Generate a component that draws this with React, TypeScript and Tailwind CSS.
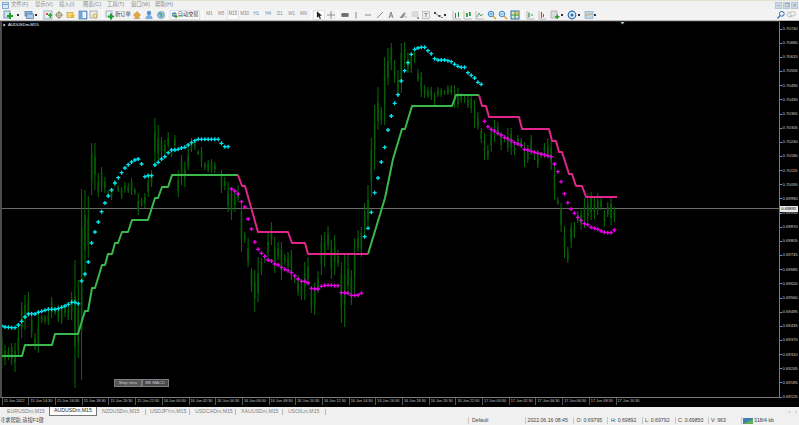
import React from "react";

const B: number[] = [
330,368,345,365,347,360,343,365,343,372,326,357,302,338,295,330,292,317,315,338,
333,350,312,353,315,323,315,324,310,325,297,318,308,315,305,322,307,324,305,317,
305,320,292,320,260,388,280,358,189,380,190,278,196,258,143,195,143,190,173,197,
167,192,177,193,190,197,188,200,180,187,185,192,187,199,182,193,183,193,178,195,
188,195,193,215,198,207,193,208,173,197,170,187,118,167,125,160,137,157,140,158,
132,148,150,157,135,150,170,197,155,185,162,187,147,170,138,152,140,150,150,155,
147,167,162,170,160,172,159,173,162,173,172,173,170,193,177,190,182,212,187,220,
190,212,185,202,202,252,232,243,238,267,268,292,270,312,257,302,258,275,255,263,
233,258,222,245,237,273,242,260,242,280,254,265,252,270,250,280,275,283,275,296,
283,300,262,300,257,285,288,313,282,315,271,293,235,275,232,267,226,250,240,279,
235,275,250,267,262,323,255,327,255,293,270,305,238,293,230,252,227,257,203,237,
185,227,138,197,105,170,87,130,107,125,57,125,48,85,43,70,60,83,70,97,
43,93,42,67,52,73,53,73,48,63,69,82,72,97,85,98,87,98,87,100,
92,105,87,97,88,97,90,95,85,95,85,95,85,108,88,108,93,103,95,103,
95,108,95,113,100,128,112,130,128,143,133,160,145,160,128,152,120,142,122,135,
132,150,135,142,128,152,128,155,142,155,135,145,138,148,142,167,145,163,135,155,
150,160,150,168,152,158,143,158,138,158,142,170,165,200,197,205,203,232,226,258,
247,263,223,248,222,238,211,223,210,230,198,228,193,222,192,220,198,219,193,215,
198,210,210,227,202,217,198,225,207,222,
];

const D: number[] = [
326,327,327.3,327.7,327.7,325,321.3,317,314,313.7,314,312.3,311.3,310.3,309.3,309.3,309.3,308.7,307.3,306,
304.3,302.3,302.3,303.7,281,274,262,243,232,222,211.7,203,196,190,183,177.7,172.7,168,164.7,162,
160,159,164,176.7,175.7,175.7,165,162.3,159,156.7,152.7,150,150,149.3,148,147.3,145,142.7,140.7,139.3,
139.3,139.3,139.3,139.3,139.3,139.3,143.3,146.7,146.7,189,191,194,201.7,207,219,229,242,249.3,253.3,256.3,
260,261,264,265,267.3,269.3,270.7,272.7,275.7,279,281.3,281.3,283,288.3,289,289,286.3,285.3,285.3,285.3,
285.7,285.7,292.7,292.7,293.3,295.3,295.3,295,293.3,236.7,228.3,212.3,192.7,178,162,147.3,130,116,103.3,94.7,
81,70.7,62.7,54.3,49.3,48,47.3,47.3,50.7,53.7,58.7,60,60,60,60.7,61.7,64.3,66.3,67.3,67.3,
72.7,75.3,78,82.3,84.3,121.3,126.7,129.3,131,133.3,135,137.3,138.7,140.7,142.7,144,145.3,149.3,150,151.3,
152.3,153.3,154,155,155.7,156.7,164,171.7,181.7,193.7,202.7,209,213.3,217.3,220.3,223.7,224.7,227.3,228.3,229.3,
231,232.3,232.7,232.7,230,
];

const X = (i: number) => 1.7 + 3.33 * i;
const isCyan = (i: number) => i <= 68 || (i >= 109 && i <= 144);

const green1 = "1,356 22,356 25,345 52,345 55,334 78,334 85,311 88,311 92,288 95,288 102,265 105,265 108,254 112,254 115,243 118,243 122,232 128,232 132,220 148,220 155,198 158,198 162,187 168,187 172,175 238,175";
const pink1 = "238,175 242,186 245,186 258,232 288,232 292,243 305,243 308,254 368,254";
const green2 = "368,254 385,198 393,159 402,129 405,129 412,106 452,106 456,95 479,95";
const pink2 = "479,95 482,106 486,106 489,117 519,117 522,129 549,129 552,141 556,141 559,152 562,152 569,174 572,174 576,186 582,186 586,197 617,197";

const PRICES = ["0.70740","0.70680","0.70615","0.70555","0.70490","0.70430","0.70365","0.70305","0.70240","0.70180","0.70115","0.70055","0.69990","0.69930","0.69870","0.69805","0.69745","0.69685","0.69620","0.69560","0.69495","0.69435","0.69370","0.69310","0.69245","0.69185","0.69125"];
const TIMES = ["15 Jun 2022","15 Jun 14:30","15 Jun 16:30","15 Jun 18:30","15 Jun 20:30","15 Jun 22:30","16 Jun 00:30","16 Jun 02:30","16 Jun 04:30","16 Jun 06:30","16 Jun 08:30","16 Jun 10:30","16 Jun 12:30","16 Jun 14:30","16 Jun 16:30","16 Jun 18:30","16 Jun 20:30","16 Jun 22:30","17 Jun 00:30","17 Jun 02:30","17 Jun 04:30","17 Jun 06:30","17 Jun 08:30","17 Jun 10:30"];

function Slot({ children }: { children?: React.ReactNode }) {
  return <div className="w-[11.7px] h-[10px] flex items-center justify-center shrink-0">{children}</div>;
}
function Ico({ children }: { children: React.ReactNode }) {
  return <svg width="10" height="10" viewBox="0 0 10 10">{children}</svg>;
}
const Sep = () => <div className="w-px h-[9px] bg-[#c4c4c4] border-r border-white shrink-0" />;
const Caret = () => <div className="w-[2px] h-[2px] bg-[#333] shrink-0" />;

const IcNew = () => <Ico><rect x="1" y="1" width="6" height="7" fill="#cfe0ee" stroke="#5b87ad" strokeWidth=".8"/><path d="M4 5h2V3h2v2h2v2H8v2H6V7H4z" fill="#20a020"/></Ico>;
const IcProfile = () => <Ico><rect x="1" y="1.5" width="7" height="4.5" fill="#8fb4dc" stroke="#4a78a8" strokeWidth=".7"/><rect x="2.5" y="4" width="7" height="4.5" fill="#a9c7e8" stroke="#4a78a8" strokeWidth=".7"/></Ico>;
const IcChartPlus = () => <Ico><rect x="1" y="1" width="8" height="8" fill="#e8eef2" stroke="#7a9ab0" strokeWidth=".7"/><path d="M3 3h2v2H3z" fill="#d44"/><path d="M5 4.5h1.5V3H8v1.5h1V6H8v2H6.5V6H5z" fill="#2aa52a"/></Ico>;
const IcCross = () => <Ico><circle cx="5" cy="5" r="2.6" fill="none" stroke="#8a8a60" strokeWidth="1"/><path d="M5 .8v8.4M.8 5h8.4" stroke="#8a8a60" strokeWidth=".8"/></Ico>;
const IcStar = () => <Ico><rect x="1" y="2.5" width="6" height="5" fill="#f3d774" stroke="#b79a2e" strokeWidth=".6"/><path d="M6.5 3.5l1 1.6 1.7.3-1.2 1.2.3 1.7-1.8-.8-1.7.8.3-1.7-1.2-1.2 1.7-.3z" fill="#e9b92c"/></Ico>;
const IcBlueWin = () => <Ico><rect x="1.2" y="1.2" width="7.6" height="7.6" fill="#f0f4f8" stroke="#3b78b8" strokeWidth="1"/><rect x="1.5" y="1.5" width="3" height="7" fill="#6fa5d8"/></Ico>;
const IcMag = () => <Ico><rect x="1" y="1" width="7" height="7" fill="#eaeaea" stroke="#9a9a9a" strokeWidth=".7"/><circle cx="6" cy="6" r="2" fill="#f6e7a4" stroke="#b69a3a" strokeWidth=".7"/></Ico>;
const IcOrder = () => <Ico><rect x="1" y="1" width="6" height="6" fill="#e4eef4" stroke="#7f9db0" strokeWidth=".7"/><path d="M3 5.5h2v-2h2v2h2v2H7v2H5v-2H3z" fill="#1e9e2a"/></Ico>;
const IcDiamond = () => <Ico><path d="M5 1.5l3.5 3.5L5 8.5 1.5 5z" fill="#e3a93a" stroke="#a87820" strokeWidth=".5"/><path d="M2 7.5h6v1.3H2z" fill="#c99a55"/></Ico>;
const IcPerson = () => <Ico><circle cx="5" cy="3" r="2.2" fill="#5a92cf"/><path d="M1.5 9c0-3 1.5-4 3.5-4s3.5 1 3.5 4z" fill="#7eaee0"/></Ico>;
const IcGlobe = () => <Ico><circle cx="5" cy="5" r="3.6" fill="#8fbfd8" stroke="#6c93aa" strokeWidth=".6"/><path d="M3 3.5c1 .3 2 0 2.5 1s-1 1.5-.5 2.5" stroke="#4f9d58" strokeWidth="1.1" fill="none"/></Ico>;
const IcAuto = () => <Ico><circle cx="4.5" cy="4.5" r="3.4" fill="#3d8fd0"/><path d="M2 4.5h5" stroke="#e6c43a" strokeWidth="1.5"/><path d="M5 6.5h1.3V5h1.4v1.5H9V8H7.7v1.5H6.3V8H5z" fill="#26a32a"/></Ico>;
const IcCursor = () => <Ico><path d="M3 1v7l1.8-1.7L6 9l1.2-.5L6 5.9h2.3z" fill="#222"/></Ico>;
const IcPlus = () => <Ico><path d="M5 1v8M1 5h8" stroke="#888" strokeWidth=".9"/></Ico>;
const IcHBox = () => <Ico><rect x="1.5" y="3" width="7" height="4" fill="#777"/><path d="M1.5 5h7" stroke="#555" strokeWidth=".6"/></Ico>;
const IcV = () => <Ico><path d="M5 2v6.5" stroke="#888" strokeWidth="1"/></Ico>;
const IcH = () => <Ico><path d="M2 5h6" stroke="#888" strokeWidth="1"/></Ico>;
const IcDiag = () => <Ico><path d="M2 8l6-6" stroke="#888" strokeWidth="1"/></Ico>;
const IcA = () => <Ico><path d="M3 8l2-6 2 6M3.8 6h2.4" stroke="#777" strokeWidth=".9" fill="none"/></Ico>;
const IcPen = () => <Ico><path d="M1.5 8l4-5 2 1-3 4z" fill="#8a8a8a"/><path d="M6 2l2 2" stroke="#b5b5b5" strokeWidth="1"/><path d="M6 7h3" stroke="#999" strokeWidth=".8"/></Ico>;
const IcLines = () => <Ico><path d="M1.5 2h7M1.5 4h7M1.5 6h7" stroke="#bcbcbc" strokeWidth=".9"/><path d="M7 7h2v2H7z" fill="#999"/></Ico>;
const IcT = () => <Ico><rect x="1.5" y="1.5" width="7" height="7" fill="#ececec" stroke="#a8a8a8" strokeWidth=".6"/><path d="M3.5 3.5h3M5 3.5v3.5" stroke="#777" strokeWidth=".8"/></Ico>;
const IcNodes = () => <Ico><path d="M2 3l4 3" stroke="#666" strokeWidth=".8"/><path d="M1 2h2v2H1zM5.5 5h2v2h-2z" fill="#444"/><path d="M8 7.5l1.5 0" stroke="#2c8f3c" strokeWidth="1"/></Ico>;
const IcBars = () => <Ico><path d="M1 1v8h8" stroke="#999" strokeWidth=".6" fill="none"/><path d="M3.5 3v5M3 4h1M6.5 2v5M6 6h1" stroke="#2c8f3c" strokeWidth="1"/></Ico>;
const IcCandle = () => <Ico><path d="M1 1v8h8" stroke="#999" strokeWidth=".6" fill="none"/><rect x="3" y="3" width="1.8" height="4" fill="#2c9f3c"/><rect x="6" y="2" width="1.8" height="4" fill="#2c9f3c"/></Ico>;
const IcLineCh = () => <Ico><path d="M1 1v8h8" stroke="#999" strokeWidth=".6" fill="none"/><path d="M2 7l2-4 2 3 2-2" stroke="#3a8f4a" strokeWidth=".8" fill="none"/></Ico>;
const IcZoomIn = () => <Ico><circle cx="4" cy="4" r="2.8" fill="#cfe5f5" stroke="#3d8ad0" strokeWidth="1"/><path d="M6 6l3 3" stroke="#d6a52a" strokeWidth="1.4"/><path d="M2.6 4h2.8M4 2.6v2.8" stroke="#3d8ad0" strokeWidth=".7"/></Ico>;
const IcZoomOut = () => <Ico><circle cx="4" cy="4" r="2.8" fill="#cfe5f5" stroke="#3d8ad0" strokeWidth="1"/><path d="M6 6l3 3" stroke="#d6a52a" strokeWidth="1.4"/><path d="M2.6 4h2.8" stroke="#3d8ad0" strokeWidth=".7"/></Ico>;
const IcGrid = () => <Ico><rect x="1" y="1" width="8" height="8" fill="#dde8d8" stroke="#2c6fb5" strokeWidth="1"/><path d="M5 1v8M1 5h8" stroke="#2a8f3a" strokeWidth="1"/><path d="M5.5 1.5h3v3h-3z" fill="#e8b43a"/></Ico>;
const IcShift = () => <Ico><path d="M2 1v8h7" stroke="#999" strokeWidth=".6" fill="none"/><path d="M4 2.5v5" stroke="#2c8f3c" strokeWidth="1.2"/><path d="M6 5l2 0" stroke="#2c8f3c" strokeWidth="1"/></Ico>;
const IcShiftR = () => <Ico><path d="M2 1v8h7" stroke="#999" strokeWidth=".6" fill="none"/><path d="M4.5 2v6" stroke="#c84a2a" strokeWidth="1.2"/><path d="M6.5 4v3" stroke="#2c8f3c" strokeWidth="1"/></Ico>;
const IcIndic = () => <Ico><rect x="1" y="1" width="6" height="7" fill="#ddd" stroke="#999" strokeWidth=".6"/><path d="M5 6h1.5V4.5H8V6h1.5v1.5H8V9H6.5V7.5H5z" fill="#1ea52a"/></Ico>;
const IcClock = () => <Ico><circle cx="5" cy="5" r="3.8" fill="#d8e8f4" stroke="#2d6fb0" strokeWidth="1.2"/><circle cx="5" cy="5" r="1.5" fill="#2d6fb0"/></Ico>;
const IcTemplate = () => <Ico><rect x="1" y="1.5" width="8" height="7" fill="#bcd6ea" stroke="#7fa0bc" strokeWidth=".6"/><path d="M2 6l2-2 2 1 2-2" stroke="#d89a3a" strokeWidth=".8" fill="none"/></Ico>;
const IcSearch = () => <Ico><circle cx="5.8" cy="3.8" r="2.4" fill="none" stroke="#2c6fc0" strokeWidth="1"/><path d="M4 5.6L1.5 8.5" stroke="#2c6fc0" strokeWidth="1.2"/></Ico>;
const IcChat = () => <Ico><ellipse cx="4" cy="4.5" rx="3" ry="2.4" fill="#eee" stroke="#aaa" strokeWidth=".7"/><ellipse cx="6.8" cy="3.7" rx="2.6" ry="2.2" fill="#f4f4f4" stroke="#aaa" strokeWidth=".7"/></Ico>;

function TF({ t, on }: { t: string; on?: boolean }) {
  return (
    <div className={on
      ? "w-[11.75px] h-[10px] flex items-center justify-center shrink-0 text-[4.5px] text-[#777] bg-[#fbfbfb] border border-[#e2e2e2]"
      : "w-[11.75px] h-[10px] flex items-center justify-center shrink-0 text-[4.5px] text-[#888]"}>
      {t}
    </div>
  );
}

const MENUS = ["文件(F)", "显示(V)", "插入(I)", "图表(C)", "工具(T)", "窗口(W)", "帮助(H)"];
const TABS = [
  ["EURUSDm,M15", "w-[47px] pl-[7px]"],
  ["AUDUSDm,M15", ""],
  ["NZDUSDm,M15", "w-[47px] pl-[3px]"],
  ["USDJPYm,M15", "w-[44px] pl-[4px]"],
  ["USDCADm,M15", "w-[46px] pl-[5px]"],
  ["XAUUSDm,M15", "w-[47px] pl-[5px]"],
  ["USOILm,M15", "w-[43px] pl-[5px]"],
];

export default function App() {
  return (
    <div className="w-[799px] h-[425px] overflow-hidden flex flex-col bg-[#f0f0f0] font-['Liberation_Sans','Noto_Sans_CJK_SC',sans-serif] leading-none">
      {/* menu bar */}
      <div className="h-[9px] flex items-center shrink-0 bg-[#f1f1f1] border-t border-[#dfe3d2]">
        <svg width="7" height="7" viewBox="0 0 7 7" className="ml-[2px] shrink-0"><rect x=".5" y=".5" width="6" height="6" fill="#dbe8f4" stroke="#6d9cc8" strokeWidth=".8"/><path d="M1 2.5h5" stroke="#6d9cc8"/></svg>
        <div className="flex text-[5.3px] text-[#8a8a8a] ml-[2px]">
          {MENUS.map((m) => <span key={m} className="w-[24px]">{m}</span>)}
        </div>
        <div className="ml-auto flex gap-px pr-px">
          {["–", "❐", "×"].map((s) => (
            <div key={s} className="w-[7px] h-[7px] bg-[#c9d9e8] border border-[#b4c8da] text-[5px] text-[#5d7f9e] flex items-center justify-center">{s}</div>
          ))}
        </div>
      </div>
      {/* toolbar */}
      <div className="h-[12px] flex items-center shrink-0 bg-[#f3f3f3] border-b border-[#b8b8b8]">
        <div className="w-[2px] shrink-0" />
        <Slot><IcNew /></Slot><div className="w-[3px]"/><Caret /><div className="w-[4px]"/>
        <Slot><IcProfile /></Slot><div className="w-[1px]"/><Caret /><div className="w-[3px]"/><Sep /><div className="w-[0.5px]"/>
        <Slot><IcChartPlus /></Slot><Slot><IcCross /></Slot><Slot><IcStar /></Slot><Slot><IcBlueWin /></Slot><Slot><IcMag /></Slot>
        <div className="w-[2px]"/><Sep /><div className="w-[1px]"/>
        <Slot><IcOrder /></Slot>
        <span className="text-[5.2px] text-[#333] w-[16.5px] -ml-[1px]">新订单</span>
        <Slot><IcDiamond /></Slot><Slot><IcPerson /></Slot><Slot><IcGlobe /></Slot>
        <Sep /><div className="w-[2px]"/>
        <div className="w-[30px] h-[10px] flex items-center bg-[#fbfbfb] border border-[#e0e0e0] shrink-0">
          <IcAuto />
          <span className="text-[5.2px] text-[#333] whitespace-nowrap">自动交易</span>
        </div>
        <div className="w-[2px]"/><Sep /><div className="w-[1px]"/>
        <TF t="M1" /><TF t="M5" /><TF t="M15" on /><TF t="M30" /><TF t="H1" /><TF t="H4" /><TF t="D1" /><TF t="W1" /><TF t="MN" />
        <div className="w-[2px]"/><Sep /><div className="w-[1px]"/>
        <div className="w-[11.7px] h-[10px] flex items-center justify-center bg-white border border-[#e2e2e2] shrink-0"><IcCursor /></div>
        <Slot><IcPlus /></Slot>
        <Sep /><div className="w-[1px]"/>
        <Slot><IcHBox /></Slot><Slot><IcV /></Slot><Slot><IcH /></Slot><Slot><IcDiag /></Slot><Slot><IcA /></Slot><Slot><IcPen /></Slot><Slot><IcLines /></Slot><Slot><IcT /></Slot><Slot><IcNodes /></Slot>
        <Caret /><div className="w-[3px]"/><Sep /><div className="w-[1px]"/>
        <Slot><IcBars /></Slot><Slot><IcCandle /></Slot><Slot><IcLineCh /></Slot><Slot><IcZoomIn /></Slot><Slot><IcZoomOut /></Slot><Slot><IcGrid /></Slot>
        <div className="w-[1px]"/><Sep /><div className="w-[1px]"/>
        <Slot><IcShift /></Slot><Slot><IcShiftR /></Slot>
        <div className="w-[2px]"/>
        <Slot><IcIndic /></Slot><Caret /><div className="w-[3px]"/>
        <Slot><IcClock /></Slot><Caret /><div className="w-[3px]"/>
        <Slot><IcTemplate /></Slot><Caret />
        <div className="ml-auto flex pr-[3px]"><IcSearch /><IcChat /></div>
      </div>
      {/* chart */}
      <div className="h-[386px] shrink-0 flex bg-black relative">
        <div className="w-[780px] shrink-0 flex flex-col">
          <div className="h-[377px] shrink-0 relative border-t border-l-2 border-r border-b border-t-[#2a2a2a] border-l-[#4c4c4c] border-r-[#7a7a7a] border-b-[#7a7a7a]">
            <svg width="777" height="375" viewBox="2 22 777 375" className="block">
              <line x1="2" x2="779" y1="208.5" y2="208.5" stroke="#6a6a6a" strokeWidth="1" />
              {D.map((_, i) => {
                const hi = B[i * 2], lo = B[i * 2 + 1];
                const h = lo - hi;
                const x = X(i);
                const t = hi + h * (0.2 + (i % 3) * 0.08);
                const b = lo - h * (0.2 + ((i + 1) % 3) * 0.06);
                return (
                  <g key={i}>
                    <line x1={x} x2={x} y1={hi} y2={lo} stroke="#066e06" strokeWidth="1" />
                    <line x1={x} x2={x} y1={t} y2={b} stroke="#055c05" strokeWidth="1.6" />
                  </g>
                );
              })}
              <polyline points={green1} fill="none" stroke="#3bb84c" strokeWidth="2" strokeLinejoin="round" />
              <polyline points={green2} fill="none" stroke="#3bb84c" strokeWidth="2" strokeLinejoin="round" />
              <polyline points={pink1} fill="none" stroke="#e0268c" strokeWidth="2" strokeLinejoin="round" />
              <polyline points={pink2} fill="none" stroke="#e0268c" strokeWidth="2" strokeLinejoin="round" />
              {D.map((y, i) => {
                const x = X(i);
                return (
                  <path
                    key={i}
                    d={`M${x - 2} ${y}H${x + 2}M${x} ${y - 2}V${y + 2}`}
                    stroke={isCyan(i) ? "#00e6f0" : "#e600e6"}
                    strokeWidth="1.3"
                    fill="none"
                  />
                );
              })}
              <path d="M620.5 22h4l-2 2.5z" fill="#a9c8e0" />
              <path d="M3 24h3l-1.5 2z" transform="rotate(-90 4.5 25)" fill="#fff" />
            </svg>
            <span className="absolute left-[6px] top-[1px] text-[4.2px] text-white whitespace-nowrap">AUDUSDm,M15</span>
            <div className="absolute left-[112px] top-[357px] flex text-[4.3px] text-[#c8c8c8]">
              <div className="w-[27.5px] h-[8px] flex items-center justify-center bg-[#585858] border border-[#7d7d7d]">Step vma</div>
              <div className="w-[27px] h-[8px] flex items-center justify-center bg-[#4a4a4a] border border-[#7d7d7d]">BB MACD</div>
            </div>
          </div>
          <div className="h-[9px] flex pl-[1.7px] text-[3.8px] text-[#c4c4c4]">
            {TIMES.map((t) => (
              <div key={t} className="w-[26.7px] shrink-0 h-[7px] border-l border-[#555] pl-px pt-[2px] whitespace-nowrap">{t}</div>
            ))}
          </div>
        </div>
        <div className="w-[19px] shrink-0 flex flex-col pt-px text-[4.2px] text-[#d0d0d0]">
          {PRICES.map((p) => (
            <div key={p} className="h-[14.16px] shrink-0 flex items-center gap-[1px]">
              <div className="w-[1.5px] h-px bg-[#888]" />
              <span>{p}</span>
            </div>
          ))}
        </div>
        <div className="absolute left-[780px] top-[185px] w-[17.5px] h-[5.5px] bg-[#e8e8e8] text-[4.2px] text-black flex items-center justify-center">0.69892</div>
      </div>
      {/* tabs */}
      <div className="h-[9px] shrink-0 flex items-center text-[5.2px] text-[#808080] bg-[#f0f0f0]">
        {TABS.map(([t, c]) =>
          t === "AUDUSDm,M15" ? (
            <div key={t} className="w-[48px] h-[9px] shrink-0 ml-[2px] mr-[2px] flex items-center justify-center bg-white border border-t-0 border-[#777] text-[#222]">{t}</div>
          ) : (
            <div key={t} className={`${c} h-[6px] shrink-0 flex items-center whitespace-nowrap ${t === "EURUSDm,M15" ? "" : "border-r border-[#b8b8b8]"}`}>{t}</div>
          )
        )}
        <span className="ml-auto pr-[2px] text-[5px] text-[#999] flex gap-[5px]"><span>‹</span><span>›</span></span>
      </div>
      {/* status */}
      <div className="h-[9px] shrink-0 flex items-center text-[5.2px] text-[#444] bg-[#f0f0f0]">
        <span className="w-[468px] shrink-0 whitespace-nowrap">寻求帮助,请按F1键</span>
        <div className="w-[57px] shrink-0 h-[7px] border-l border-[#c8c8c8] pl-[3px] flex items-center">Default</div>
        <div className="w-[47.5px] shrink-0 h-[7px] border-l border-[#c8c8c8] pl-[1.5px] flex items-center whitespace-nowrap">2022.06.16 08:45</div>
        <div className="w-[34.5px] shrink-0 h-[7px] border-l border-[#c8c8c8] pl-[3px] flex items-center whitespace-nowrap">O: 0.69795</div>
        <div className="w-[35px] shrink-0 h-[7px] border-l border-[#c8c8c8] pl-[3px] flex items-center whitespace-nowrap">H: 0.69892</div>
        <div className="w-[33px] shrink-0 h-[7px] border-l border-[#c8c8c8] pl-[2px] flex items-center whitespace-nowrap">L: 0.69792</div>
        <div className="w-[33px] shrink-0 h-[7px] border-l border-[#c8c8c8] pl-[2px] flex items-center whitespace-nowrap">C: 0.69850</div>
        <div className="w-[32.5px] shrink-0 h-[7px] border-l border-[#c8c8c8] pl-[2px] flex items-center whitespace-nowrap">V: 963</div>
        <div className="flex-1 h-[7px] border-l border-[#c8c8c8] pl-px flex items-center gap-[1.5px] whitespace-nowrap">
          <svg width="10" height="6" viewBox="0 0 10 6"><rect width="10" height="6" fill="#3f7fb8"/><path d="M0 6l10-5v5z" fill="#5fae5a"/></svg>
          318/4 kb
        </div>
      </div>
    </div>
  );
}
